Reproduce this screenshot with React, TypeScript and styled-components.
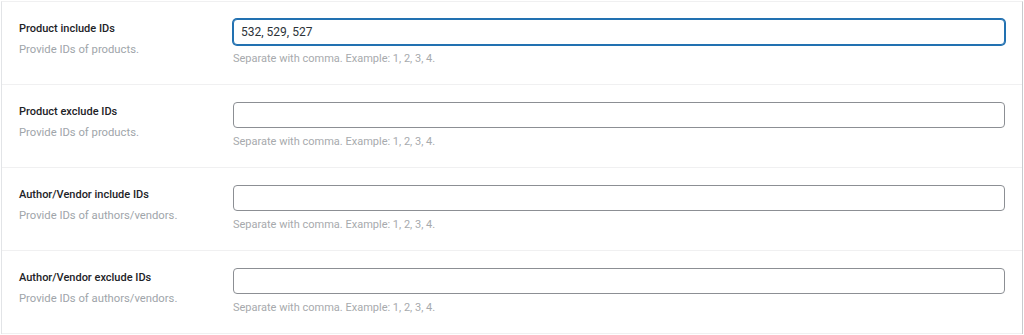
import React from 'react'
import styled, { createGlobalStyle } from 'styled-components'

const GlobalStyle = createGlobalStyle`
  html, body {
    margin: 0;
    background: #fff;
  }
  body {
    padding: 1px 1px 0 1px;
    font-family: Roboto, 'Open Sans', sans-serif;
    color: #1d2327;
  }
`

const Card = styled.div`
  background: #fff;
  border-top: 1px solid #f0f0f1;
  border-left: 1px solid #e2e4e7;
  border-right: 1px solid #c8cacd;
`

const Row = styled.div`
  display: grid;
  grid-template-columns: 214px 1fr;
  padding: 17px;
  border-bottom: 1px solid #f0f0f1;
`

const LabelCell = styled.div`
  display: flex;
  flex-direction: column;
`

const Label = styled.label`
  font-size: 11px;
  font-weight: 500;
  line-height: 20px;
  color: #1d2327;
`

const Description = styled.span`
  font-size: 11.25px;
  line-height: 21px;
  color: #a0a5aa;
`

const FieldCell = styled.div`
  display: flex;
  flex-direction: column;
  gap: 5px;
`

const Input = styled.input<{ $focused?: boolean }>`
  box-sizing: border-box;
  height: 26px;
  width: 100%;
  padding: 0 7px;
  font-family: inherit;
  font-size: 12px;
  color: #2c3338;
  background: #fff;
  border-radius: 4px;
  outline: none;
  border: 1px solid ${(p) => (p.$focused ? '#2271b1' : '#8c8f94')};
  box-shadow: ${(p) => (p.$focused ? '0 0 0 1px #2271b1' : 'none')};
`

const Hint = styled.p`
  margin: 0;
  font-size: 11px;
  line-height: 17px;
  color: #a7aaad;
`

const fields = [
  { label: 'Product include IDs', desc: 'Provide IDs of products.', value: '532, 529, 527', focused: true },
  { label: 'Product exclude IDs', desc: 'Provide IDs of products.', value: '' },
  { label: 'Author/Vendor include IDs', desc: 'Provide IDs of authors/vendors.', value: '' },
  { label: 'Author/Vendor exclude IDs', desc: 'Provide IDs of authors/vendors.', value: '' },
]

const App = () => (
  <>
    <GlobalStyle />
    <Card>
      {fields.map((f) => (
        <Row key={f.label}>
          <LabelCell>
            <Label>{f.label}</Label>
            <Description>{f.desc}</Description>
          </LabelCell>
          <FieldCell>
            <Input defaultValue={f.value} $focused={f.focused} />
            <Hint>Separate with comma. Example: 1, 2, 3, 4.</Hint>
          </FieldCell>
        </Row>
      ))}
    </Card>
  </>
)

export default App
